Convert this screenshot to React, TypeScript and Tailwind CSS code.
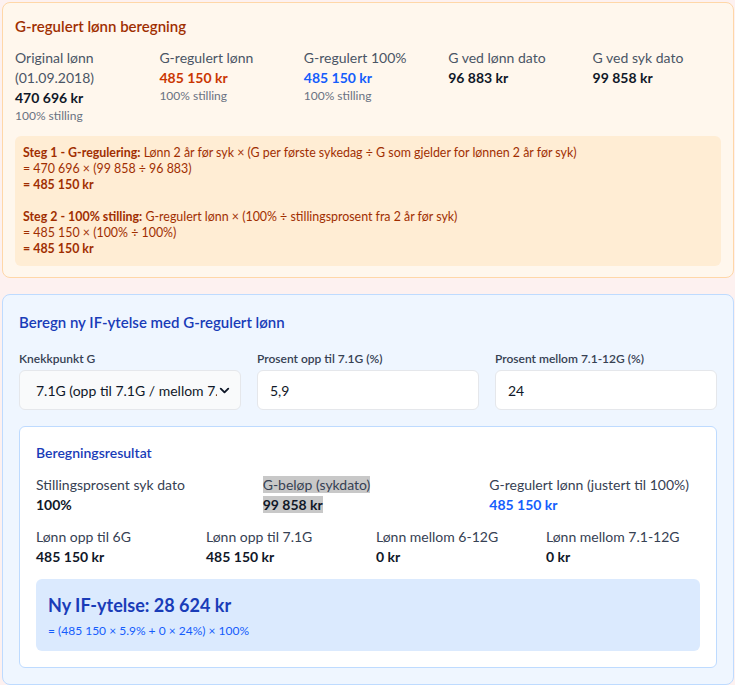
import { ChevronDown } from "lucide-react";

const orig = [
  { label: "Original lønn (01.09.2018)", value: "470 696 kr", sub: "100% stilling", color: "text-gray-900" },
  { label: "G-regulert lønn", value: "485 150 kr", sub: "100% stilling", color: "text-orange-700" },
  { label: "G-regulert 100%", value: "485 150 kr", sub: "100% stilling", color: "text-blue-600" },
  { label: "G ved lønn dato", value: "96 883 kr", color: "text-gray-900" },
  { label: "G ved syk dato", value: "99 858 kr", color: "text-gray-900" },
];

const lonn = [
  { label: "Lønn opp til 6G", value: "485 150 kr" },
  { label: "Lønn opp til 7.1G", value: "485 150 kr" },
  { label: "Lønn mellom 6-12G", value: "0 kr" },
  { label: "Lønn mellom 7.1-12G", value: "0 kr" },
];

const App = () => {
  return (
    <div className="min-h-screen bg-[#fdf1f0] pl-[2px] pr-[1px] pt-[2px]" style={{ fontFamily: "Lato, sans-serif" }}>
      {/* G-regulering */}
      <div className="rounded-lg border border-orange-200 bg-orange-50 px-3 pb-[11px] pt-3">
        <h3 className="mb-[11px] text-[15px] font-semibold leading-[22px] text-orange-800">G-regulert lønn beregning</h3>
        <div className="grid grid-cols-5 gap-4">
          {orig.map((o) => (
            <div key={o.label}>
              <div className="text-[14px] leading-5 text-gray-600">{o.label}</div>
              <div className={`text-[14px] font-bold leading-5 ${o.color}`}>{o.value}</div>
              {o.sub && <div className="text-[12px] leading-4 text-gray-500">{o.sub}</div>}
            </div>
          ))}
        </div>
        <div className="mt-3 rounded-md bg-orange-100 px-2 py-[9px] text-[12.4px] leading-4 text-orange-800">
          <div>
            <span className="font-bold">Steg 1 - G-regulering:</span> Lønn 2 år før syk × (G per første sykedag ÷ G som gjelder for lønnen 2 år før syk)
          </div>
          <div>= 470 696 × (99 858 ÷ 96 883)</div>
          <div className="font-bold">= 485 150 kr</div>
          <div className="h-4" />
          <div>
            <span className="font-bold">Steg 2 - 100% stilling:</span> G-regulert lønn × (100% ÷ stillingsprosent fra 2 år før syk)
          </div>
          <div>= 485 150 × (100% ÷ 100%)</div>
          <div className="font-bold">= 485 150 kr</div>
        </div>
      </div>

      {/* IF-ytelse */}
      <div className="mt-4 rounded-lg border border-blue-200 bg-blue-50 p-4">
        <h3 className="mb-[18px] text-[15px] font-semibold leading-[22px] text-blue-800">Beregn ny IF-ytelse med G-regulert lønn</h3>
        <div className="grid grid-cols-3 gap-4">
          <div>
            <label className="mb-[3px] block text-[12px] font-semibold leading-4 text-gray-700">Knekkpunkt G</label>
            <div className="flex h-10 items-center justify-between overflow-hidden rounded-md border border-gray-200 bg-gray-50 pl-4 pr-2 text-[14px] text-gray-900">
              <span className="overflow-hidden whitespace-nowrap pr-3">7.1G (opp til 7.1G / mellom 7.1-12G)</span>
              <ChevronDown size={15} strokeWidth={3} className="shrink-0" />
            </div>
          </div>
          <div>
            <label className="mb-[3px] block text-[12px] font-semibold leading-4 text-gray-700">Prosent opp til 7.1G (%)</label>
            <div className="flex h-10 items-center rounded-md border border-gray-200 bg-white px-3 text-[14px] text-gray-900">5,9</div>
          </div>
          <div>
            <label className="mb-[3px] block text-[12px] font-semibold leading-4 text-gray-700">Prosent mellom 7.1-12G (%)</label>
            <div className="flex h-10 items-center rounded-md border border-gray-200 bg-white px-3 text-[14px] text-gray-900">24</div>
          </div>
        </div>

        <div className="mt-4 rounded-md border border-blue-200 bg-white p-4">
          <h4 className="mb-3 text-[14px] font-semibold leading-5 text-blue-800">Beregningsresultat</h4>
          <div className="grid grid-cols-3 gap-4">
            <div>
              <div className="text-[14px] leading-5 text-gray-700">Stillingsprosent syk dato</div>
              <div className="text-[14px] font-bold leading-5 text-gray-900">100%</div>
            </div>
            <div>
              <div className="text-[14px] leading-5 text-gray-700"><span className="bg-[#c8c8c8]">G-beløp (sykdato) </span></div>
              <div className="text-[14px] font-bold leading-5 text-gray-900"><span className="bg-[#c8c8c8]">99 858 kr</span></div>
            </div>
            <div>
              <div className="text-[14px] leading-5 text-gray-700">G-regulert lønn (justert til 100%)</div>
              <div className="text-[14px] font-bold leading-5 text-blue-600">485 150 kr</div>
            </div>
          </div>
          <div className="mt-3 grid grid-cols-4 gap-4">
            {lonn.map((l) => (
              <div key={l.label}>
                <div className="text-[14px] leading-5 text-gray-700">{l.label}</div>
                <div className="text-[14px] font-bold leading-5 text-gray-900">{l.value}</div>
              </div>
            ))}
          </div>
          <div className="mt-3 rounded-md bg-blue-100 p-3">
            <div className="text-[18px] font-bold leading-7 text-blue-800">Ny IF-ytelse: 28 624 kr</div>
            <div className="mt-1 text-[12px] leading-4 text-blue-600">= (485 150 × 5.9% + 0 × 24%) × 100%</div>
          </div>
        </div>
      </div>
    </div>
  );
};
export default App;
